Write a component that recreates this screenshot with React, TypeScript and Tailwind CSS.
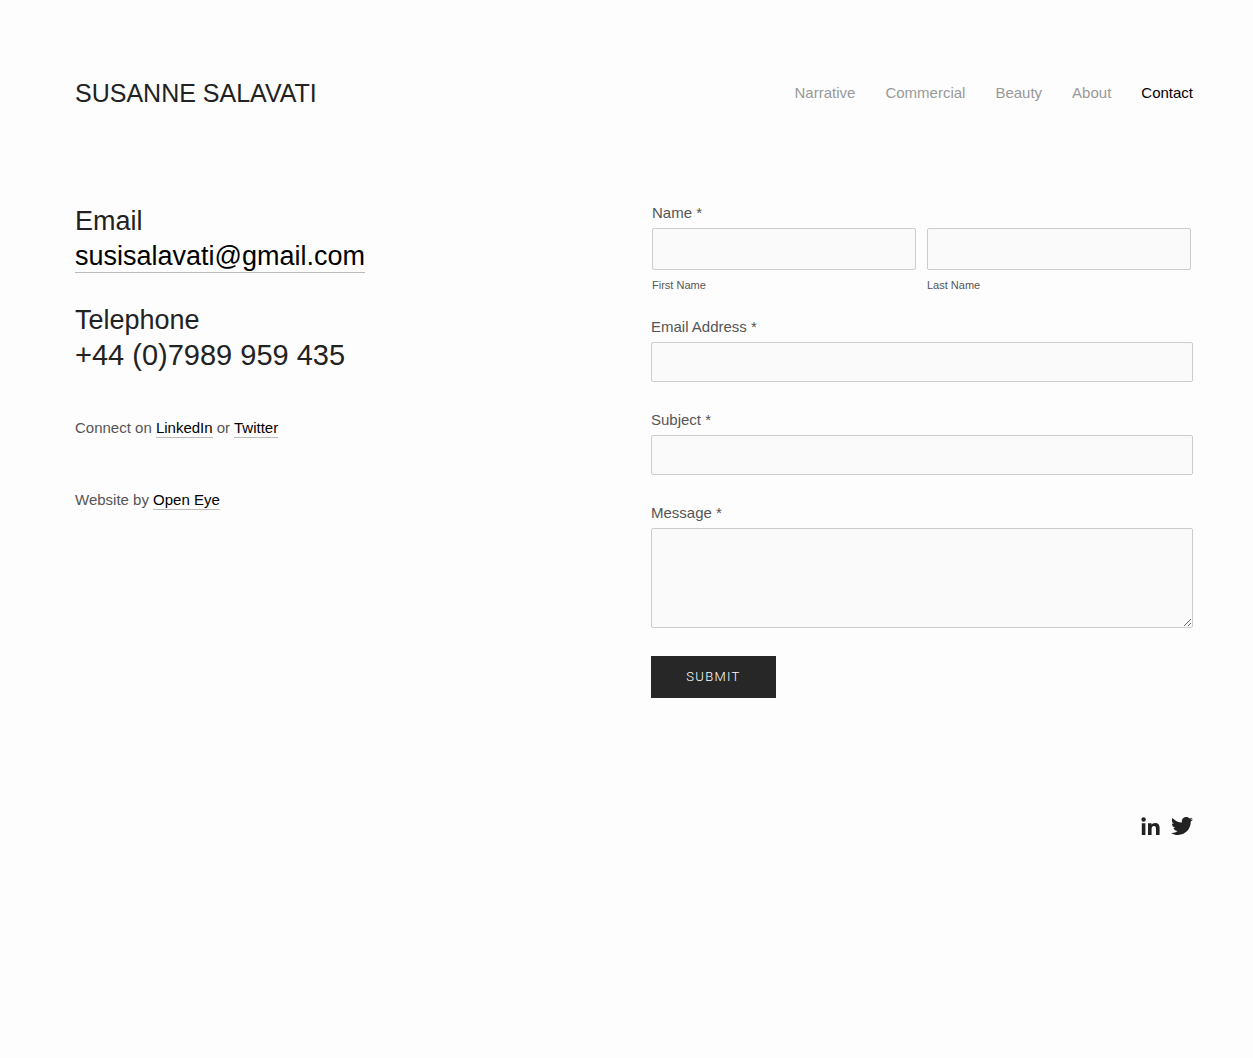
import type { ReactNode } from "react";
import { FaTwitter } from "react-icons/fa";

const NAV = ["Narrative", "Commercial", "Beauty", "About", "Contact"];

const labelClass = "block pt-px text-[15px] leading-6 text-[#555]";
const inputClass =
  "block w-full rounded-xs border border-[#ccc] bg-[#fafafa] px-3 outline-none focus:border-[#999]";

function TextLink({ href, children }: { href: string; children: ReactNode }) {
  return (
    <a href={href} className="border-b border-[#bbb] pb-px text-black">
      {children}
    </a>
  );
}

function LinkedInIcon() {
  return (
    <svg width="19" height="19" viewBox="0 0 19 19" fill="currentColor" aria-hidden="true">
      <circle cx="2.6" cy="2.5" r="2.2" />
      <path d="M.8 6.2h3.6V18H.8zM7 6.2h3.5v1.6c.7-1.2 2-1.9 3.7-1.9 3.4 0 4.4 2.1 4.4 5.3V18H15v-6c0-1.7-.4-2.9-2-2.9-1.700 0-2.400 1.200-2.400 2.900v6H7z" />
    </svg>
  );
}

function Header() {
  return (
    <header className="flex items-center justify-between">
      <h1 className="text-[25px] leading-9">
        <a href="#home">SUSANNE SALAVATI</a>
      </h1>
      <nav className="flex gap-[30px] text-[15px] leading-6">
        {NAV.map((item) => (
          <a
            key={item}
            href={`#${item.toLowerCase()}`}
            className={item === "Contact" ? "text-black" : "text-[#999]"}
          >
            {item}
          </a>
        ))}
      </nav>
    </header>
  );
}

function Details() {
  return (
    <section>
      <div className="pt-1 text-[27px] leading-[35px]">
        <h2>Email</h2>
        <p>
          <TextLink href="mailto:susisalavati@gmail.com">susisalavati@gmail.com</TextLink>
        </p>
        <h2 className="mt-[29px]">Telephone</h2>
        <p className="text-[29px]">+44 (0)7989 959 435</p>
      </div>
      <div className="mt-[43px] text-[15px] leading-6 text-[#555]">
        <p>
          Connect on <TextLink href="#linkedin">LinkedIn</TextLink> or{" "}
          <TextLink href="#twitter">Twitter</TextLink>
        </p>
        <p className="mt-12">
          Website by <TextLink href="#open-eye">Open Eye</TextLink>
        </p>
      </div>
    </section>
  );
}

function Field({ id, label, type = "text" }: { id: string; label: string; type?: string }) {
  return (
    <div>
      <label htmlFor={id} className={labelClass}>
        {label} *
      </label>
      <input id={id} type={type} className={`${inputClass} mt-[3px] h-10`} />
    </div>
  );
}

function ContactForm() {
  return (
    <form onSubmit={(e) => e.preventDefault()}>
      <fieldset className="pr-0.5 pl-px">
        <legend className={labelClass}>Name *</legend>
        <div className="mt-[3px] grid grid-cols-2 gap-[11px] text-[11px] leading-4 text-[#555]">
          <div className="flex flex-col-reverse">
            <label htmlFor="first-name" className="mt-[7px]">
              First Name
            </label>
            <input id="first-name" type="text" className={`${inputClass} h-[42px]`} />
          </div>
          <div className="flex flex-col-reverse">
            <label htmlFor="last-name" className="mt-[7px]">
              Last Name
            </label>
            <input id="last-name" type="text" className={`${inputClass} h-[42px]`} />
          </div>
        </div>
      </fieldset>
      <div className="mt-[21px] space-y-[25px]">
        <Field id="email" label="Email Address" type="email" />
        <Field id="subject" label="Subject" />
        <div>
          <label htmlFor="message" className={labelClass}>
            Message *
          </label>
          <textarea id="message" className={`${inputClass} mt-[3px] h-[100px] resize-y py-2`} />
        </div>
      </div>
      <button
        type="submit"
        className="mt-7 h-[42px] w-[125px] bg-[#272727] font-[Roboto,sans-serif] text-[13px] font-light tracking-widest text-white"
      >
        SUBMIT
      </button>
    </form>
  );
}

export default function App() {
  return (
    <div className="min-h-screen bg-[#fdfdfd] pt-[75px] pr-[60px] pl-[75px] font-['Liberation_Sans',Arial,sans-serif] text-[#222]">
      <Header />
      <main className="mt-[89px] grid grid-cols-2 gap-[34px]">
        <Details />
        <ContactForm />
      </main>
      <footer className="mt-[117px] flex items-center justify-end gap-[11px]">
        <a href="#linkedin" aria-label="LinkedIn">
          <LinkedInIcon />
        </a>
        <a href="#twitter" aria-label="Twitter">
          <FaTwitter size={22} />
        </a>
      </footer>
    </div>
  );
}
